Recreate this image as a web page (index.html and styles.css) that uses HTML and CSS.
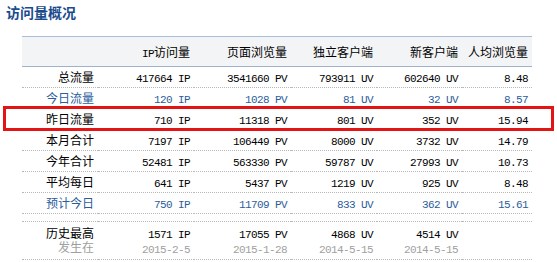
FILE: index.html
```html
<!DOCTYPE html>
<html lang="zh-CN">
<head>
<meta charset="utf-8">
<title>访问量概况</title>
<link rel="stylesheet" href="styles.css">
</head>
<body>
<div class="page">
  <h2 class="title">访问量概况</h2>
  <table class="stats">
    <colgroup>
      <col class="c1"><col class="c2"><col class="c3"><col class="c4"><col class="c5"><col class="c6">
    </colgroup>
    <thead>
      <tr>
        <th></th>
        <th><span class="mono">IP</span>访问量</th>
        <th>页面浏览量</th>
        <th>独立客户端</th>
        <th>新客户端</th>
        <th>人均浏览量</th>
      </tr>
    </thead>
    <tbody>
      <tr>
        <td>总流量</td>
        <td><span class="mono">417664 IP</span></td>
        <td><span class="mono">3541660 PV</span></td>
        <td><span class="mono">793911 UV</span></td>
        <td><span class="mono">602640 UV</span></td>
        <td><span class="mono">8.48</span></td>
      </tr>
      <tr class="blue">
        <td>今日流量</td>
        <td><span class="mono">120 IP</span></td>
        <td><span class="mono">1028 PV</span></td>
        <td><span class="mono">81 UV</span></td>
        <td><span class="mono">32 UV</span></td>
        <td><span class="mono">8.57</span></td>
      </tr>
      <tr>
        <td>昨日流量</td>
        <td><span class="mono">710 IP</span></td>
        <td><span class="mono">11318 PV</span></td>
        <td><span class="mono">801 UV</span></td>
        <td><span class="mono">352 UV</span></td>
        <td><span class="mono">15.94</span></td>
      </tr>
      <tr>
        <td>本月合计</td>
        <td><span class="mono">7197 IP</span></td>
        <td><span class="mono">106449 PV</span></td>
        <td><span class="mono">8000 UV</span></td>
        <td><span class="mono">3732 UV</span></td>
        <td><span class="mono">14.79</span></td>
      </tr>
      <tr>
        <td>今年合计</td>
        <td><span class="mono">52481 IP</span></td>
        <td><span class="mono">563330 PV</span></td>
        <td><span class="mono">59787 UV</span></td>
        <td><span class="mono">27993 UV</span></td>
        <td><span class="mono">10.73</span></td>
      </tr>
      <tr>
        <td>平均每日</td>
        <td><span class="mono">641 IP</span></td>
        <td><span class="mono">5437 PV</span></td>
        <td><span class="mono">1219 UV</span></td>
        <td><span class="mono">925 UV</span></td>
        <td><span class="mono">8.48</span></td>
      </tr>
      <tr class="blue">
        <td>预计今日</td>
        <td><span class="mono">750 IP</span></td>
        <td><span class="mono">11709 PV</span></td>
        <td><span class="mono">833 UV</span></td>
        <td><span class="mono">362 UV</span></td>
        <td><span class="mono">15.61</span></td>
      </tr>
      <tr class="spacer">
        <td></td><td></td><td></td><td></td><td></td><td></td>
      </tr>
      <tr class="peak">
        <td>历史最高<br><span class="gray">发生在</span></td>
        <td><span class="mono">1571 IP</span><br><span class="mono gray">2015-2-5</span></td>
        <td><span class="mono">17055 PV</span><br><span class="mono gray">2015-1-28</span></td>
        <td><span class="mono">4868 UV</span><br><span class="mono gray">2014-5-15</span></td>
        <td><span class="mono">4514 UV</span><br><span class="mono gray">2014-5-15</span></td>
        <td></td>
      </tr>
    </tbody>
  </table>
  <div class="highlight"></div>
</div>
</body>
</html>
```

FILE: styles.css
```css
html, body {
  margin: 0;
  padding: 0;
  background: #ffffff;
}

body {
  font-family: "Noto Sans CJK SC", "DejaVu Sans", sans-serif;
  font-size: 12px;
  color: #000000;
}

.page {
  position: relative;
  padding: 4px 0 0 6px;
}

.title {
  margin: 0;
  font-size: 14px;
  line-height: 16px;
  font-weight: bold;
  color: #1a4b8c;
}

.stats {
  margin: 16px 0 0 16px;
  width: 510px;
  table-layout: fixed;
  border-collapse: collapse;
  border-spacing: 0;
}

.c1 { width: 76px; }
.c2 { width: 96px; }
.c3 { width: 97px; }
.c4 { width: 86px; }
.c5 { width: 85px; }
.c6 { width: 70px; }

.stats th {
  height: 29px;
  padding: 0 4px;
  text-align: right;
  font-weight: normal;
  line-height: 16px;
  white-space: nowrap;
  background: #f3f4f6;
  border-top: 1px solid #a9bedb;
  border-bottom: 1px solid #9fb2cc;
  color: #000000;
}

.stats td {
  height: 20px;
  padding: 0 4px;
  text-align: right;
  line-height: 20px;
  white-space: nowrap;
  border-bottom: 1px dotted #b8b8b8;
}

.mono {
  font-family: "Liberation Mono", "DejaVu Sans Mono", monospace;
  font-size: 11px;
  line-height: 11px;
  letter-spacing: -0.6px;
}

.blue td {
  color: #2b5c9b;
}

.stats .spacer td {
  height: 7px;
  line-height: 7px;
}

.stats .peak td {
  height: 28px;
  line-height: 14px;
  padding-top: 4px;
  padding-bottom: 3px;
  vertical-align: top;
}

.gray {
  color: #a0a0a0;
}

.highlight {
  position: absolute;
  left: 3px;
  top: 106px;
  width: 545px;
  height: 19px;
  border: 3px solid #e31414;
}
```
